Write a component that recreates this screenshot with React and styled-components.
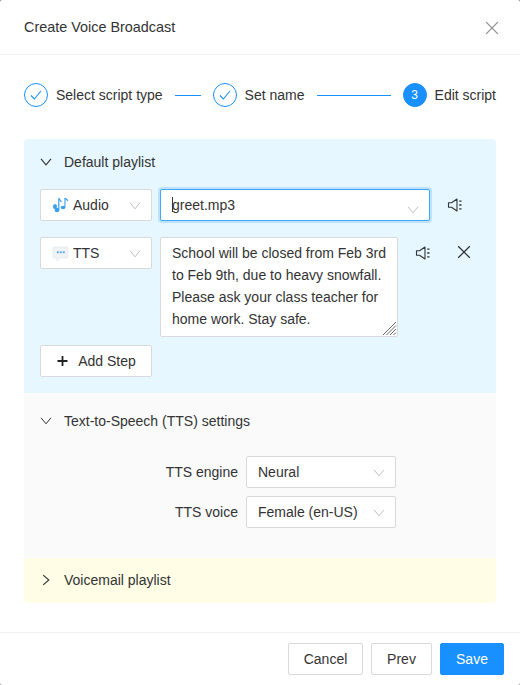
import React from "react";
import styled, { createGlobalStyle } from "styled-components";

const Global = createGlobalStyle`
  html, body { margin: 0; padding: 0; background: #737373; }
  * { box-sizing: border-box; }
  body { font-family: "Liberation Sans", Arial, sans-serif; font-size: 14px; color: #333; }
`;

const Modal = styled.div`
  width: 520px; height: 685px; background: #fff; border-radius: 2px;
  display: flex; flex-direction: column; overflow: hidden;
`;
const Header = styled.header`
  height: 55px; flex: none; border-bottom: 1px solid #f0f0f0;
  display: flex; align-items: center; justify-content: space-between;
  padding: 0 21px 0 24px; line-height: 22px;
`;
const Title = styled.div`
  font-size: 14.4px; color: #333;
`;
const CloseSlot = styled.span`
  display: flex; margin-top: 2px;
`;
const Body = styled.main`
  flex: 1; padding: 28px 24px 0;
`;
const Steps = styled.div`
  display: flex; align-items: center; height: 24px; margin-bottom: 32px;
`;
const Step = styled.div`
  display: flex; align-items: center; gap: 8px; white-space: nowrap;
`;
const Circle = styled.span`
  width: 24px; height: 24px; border-radius: 50%; flex: none;
  border: 1px solid #1890ff; color: ${p => (p.$active ? "#fff" : "#1890ff")};
  background: ${p => (p.$active ? "#1890ff" : "#fff")};
  display: flex; align-items: center; justify-content: center; font-size: 12px;
`;
const Line = styled.span`
  height: 1px; background: #1890ff; flex: none; width: ${p => p.$w}px; margin: 0 12px;
`;
const Panel = styled.section`
  background: ${p => p.$bg};
  border-radius: ${p => p.$radius};
  padding-bottom: ${p => p.$bottom}px;
`;
const PanelHead = styled.div`
  display: flex; align-items: center; gap: 12px; padding: ${p => p.$pad}; line-height: 22px;
  color: #333;
`;
const PanelBody = styled.div`
  padding: ${p => p.$top}px 16px 0;
`;
const Row = styled.div`
  display: flex; align-items: flex-start; gap: 8px; margin-bottom: ${p => p.$mb || 16}px;
`;
const Box = styled.div`
  height: 32px; background: #fff; border: 1px solid #d9d9d9; border-radius: 2px;
  display: flex; align-items: center; position: relative; width: ${p => p.$w}px; flex: none;
  padding: 0 11px; line-height: 22px; white-space: nowrap;
`;
const FocusBox = styled(Box)`
  border-color: #40a9ff; box-shadow: 0 0 0 2px rgba(24,144,255,.2); width: 270px;
`;
const Caret = styled.span`
  position: absolute; left: 11px; top: 7px; width: 1px; height: 15px; background: #333;
`;
const ChevronSlot = styled.span`
  position: absolute; right: 10px; top: ${p => p.$top || 10}px;
  display: flex; color: #bfbfbf;
`;
const TypeIcon = styled.svg`
  flex: none; display: block;
`;
const TypeLabel = styled.span`
  margin-left: 4px;
`;
const TextBox = styled.div`
  width: 238px; height: 100px; flex: none; background: #fff; border: 1px solid #d9d9d9;
  border-radius: 2px; padding: 4px 11px; line-height: 22px; position: relative; white-space: nowrap;
`;
const Grip = styled.svg`
  position: absolute; right: 0; bottom: 0; display: block;
`;
const IconBtn = styled.span`
  flex: none; display: flex; color: #333; margin: ${p => p.$m};
`;
const AddButton = styled.button`
  width: 112px; height: 32px; background: #fff; border: 1px solid #d9d9d9; border-radius: 2px;
  display: flex; align-items: center; justify-content: center; gap: 8px; padding: 0;
  font: inherit; color: #333;
`;
const FormRow = styled.div`
  display: flex; align-items: center; gap: 8px; justify-content: flex-start; margin-bottom: 8px;
`;
const FormLabel = styled.label`
  width: 198px; text-align: right; flex: none;
`;
const Footer = styled.footer`
  flex: none; height: 53px; border-top: 1px solid #f0f0f0; padding: 10px 16px;
  display: flex; justify-content: flex-end; gap: 8px;
`;
const Btn = styled.button`
  height: 32px; width: ${p => p.$w}px; border-radius: 2px; font: inherit; padding: 0;
  border: 1px solid ${p => (p.$primary ? "#1890ff" : "#d9d9d9")};
  background: ${p => (p.$primary ? "#1890ff" : "#fff")};
  color: ${p => (p.$primary ? "#fff" : "#333")};
`;

const Down = ({ sw = 1 }) => (
  <svg width="12" height="12" viewBox="0 0 12 12" fill="none" stroke="currentColor" strokeWidth={sw}>
    <path d="M1 2.8 6 8.800 11 2.800" />
  </svg>
);
const Right = () => (
  <svg width="12" height="12" viewBox="0 0 12 12" fill="none" stroke="#333" strokeWidth="1.1">
    <path d="M3.200 1.200 8.800 6 3.200 10.800" />
  </svg>
);
const Check = () => (
  <svg width="14" height="14" viewBox="0 0 14 14" fill="none" stroke="currentColor" strokeWidth="1.1">
    <path d="M2 7.500 5.300 11 12 3" />
  </svg>
);
const Close = ({ color = "#333", sw = 1.2 }) => (
  <svg width="14" height="14" viewBox="0 0 14 14" fill="none" stroke={color} strokeWidth={sw} style={{ display: "block" }}>
    <path d="M1.200 1.200 12.800 12.800M12.800 1.200 1.200 12.800" />
  </svg>
);
const Speaker = () => (
  <svg width="16" height="16" viewBox="0 0 16 16" fill="none" stroke="#333" strokeWidth="1.1">
    <path d="M1.500 5.800v4.400H4.500L10 14V2L4.500 5.800Z" strokeLinejoin="round" />
    <path d="M12.200 4.200h2.300M12.200 8h2.300M12.200 11.800h2.300" strokeWidth="1.3" />
  </svg>
);
const Plus = () => (
  <svg width="14" height="14" viewBox="0 0 14 14" fill="none" stroke="#222" strokeWidth="1.8">
    <path d="M6.500 2v10M1.500 7h10" />
  </svg>
);
const Notes = () => (
  <TypeIcon width="17" height="17" viewBox="0 0 17 17">
    <g fill="#3aa0ee">
      <ellipse cx="3" cy="9.500" rx="2" ry="2.500" />
      <ellipse cx="5" cy="13" rx="2.400" ry="2.200" />
      <ellipse cx="11" cy="10.500" rx="2.300" ry="1.800" />
      <rect x="6.200" y="1.500" width="1.200" height="11.500" />
      <rect x="12.400" y="1" width="1.100" height="9.500" />
    </g>
    <path d="M6.800 1.500 9.500 4.800M13 1 16 3.800" stroke="#3aa0ee" strokeWidth="1.200" fill="none" />
  </TypeIcon>
);
const Bubble = () => (
  <TypeIcon width="17" height="17" viewBox="0 0 17 17">
    <path d="M2.500 2h12A1.500 1.500 0 0 1 16 3.500v8a1.500 1.500 0 0 1-1.500 1.500H8.500L5 16v-3H2.500A1.500 1.500 0 0 1 1 11.500v-8A1.500 1.500 0 0 1 2.500 2Z" fill="#f0f2f4" stroke="#e2e6e9" strokeWidth=".6" />
    <g fill="#4fa8f2">
      <rect x="4.800" y="6.200" width="2" height="2" rx=".6" />
      <rect x="7.800" y="6.200" width="2" height="2" rx=".6" />
      <rect x="10.800" y="6.200" width="2" height="2" rx=".6" />
    </g>
  </TypeIcon>
);

export default function App() {
  return (
    <>
      <Global />
      <Modal>
        <Header>
          <Title>Create Voice Broadcast</Title>
          <CloseSlot><Close color="#8c8c8c" sw={1.2} /></CloseSlot>
        </Header>
        <Body>
          <Steps>
            <Step><Circle><Check /></Circle>Select script type</Step>
            <Line $w={26} />
            <Step><Circle><Check /></Circle>Set name</Step>
            <Line $w={74} />
            <Step><Circle $active>3</Circle>Edit script</Step>
          </Steps>

          <Panel $bg="#e6f7ff" $radius="4px 4px 0 0" $bottom={16}>
            <PanelHead $pad="12px 16px"><Down sw={1.1} />Default playlist</PanelHead>
            <PanelBody $top={4}>
              <Row>
                <Box $w={112}>
                  <Notes /><TypeLabel>Audio</TypeLabel>
                  <ChevronSlot><Down /></ChevronSlot>
                </Box>
                <FocusBox>
                  <Caret />greet.mp3
                  <ChevronSlot $top={14}><Down /></ChevronSlot>
                </FocusBox>
                <IconBtn $m="8px 0 0 9px"><Speaker /></IconBtn>
              </Row>
              <Row $mb={8}>
                <Box $w={112}>
                  <Bubble /><TypeLabel>TTS</TypeLabel>
                  <ChevronSlot><Down /></ChevronSlot>
                </Box>
                <TextBox>
                  School will be closed from Feb 3rd<br />
                  to Feb 9th, due to heavy snowfall.<br />
                  Please ask your class teacher for<br />
                  home work. Stay safe.
                  <Grip width="15" height="15" viewBox="0 0 15 15" stroke="#666" strokeWidth="1">
                    <path d="M1 14 14 1M4.500 14 14 4.500M8 14 14 8M11.500 14 14 11.500" />
                  </Grip>
                </TextBox>
                <IconBtn $m="8px 0 0 9px"><Speaker /></IconBtn>
                <IconBtn $m="8px 0 0 18px"><Close sw={1.3} /></IconBtn>
              </Row>
              <AddButton><Plus />Add Step</AddButton>
            </PanelBody>
          </Panel>

          <Panel $bg="#fafafa" $radius="0" $bottom={22}>
            <PanelHead $pad="17px 16px"><Down sw={1} />Text-to-Speech (TTS) settings</PanelHead>
            <PanelBody $top={7}>
              <FormRow>
                <FormLabel>TTS engine</FormLabel>
                <Box $w={150}>Neural<ChevronSlot><Down /></ChevronSlot></Box>
              </FormRow>
              <FormRow>
                <FormLabel>TTS voice</FormLabel>
                <Box $w={150}>Female (en-US)<ChevronSlot><Down /></ChevronSlot></Box>
              </FormRow>
            </PanelBody>
          </Panel>

          <Panel $bg="#fffde6" $radius="0 0 4px 4px" $bottom={0}>
            <PanelHead $pad="11px 16px 12px"><Right />Voicemail playlist</PanelHead>
          </Panel>
        </Body>
        <Footer>
          <Btn $w={75}>Cancel</Btn>
          <Btn $w={61}>Prev</Btn>
          <Btn $w={64} $primary>Save</Btn>
        </Footer>
      </Modal>
    </>
  );
}
